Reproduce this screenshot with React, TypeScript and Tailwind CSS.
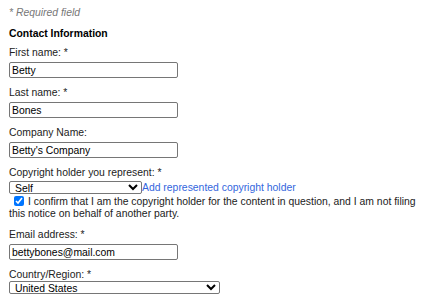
import React from 'react';

const labelCls = 'block h-[12px] leading-[12px] whitespace-nowrap';
const inputCls =
  'block mt-[3px] w-[169px] h-[16px] border border-[#767676] rounded-[2px] px-[2px] text-[10.4px] leading-[12px] text-black bg-white outline-none';

function Field({ label, value, mt }: { label: string; value: string; mt: string }) {
  return (
    <div className={mt}>
      <label className={labelCls}>{label}</label>
      <input type="text" defaultValue={value} className={inputCls} />
    </div>
  );
}

export default function App() {
  return (
    <div
      className="w-[425px] h-[303px] overflow-hidden bg-white pl-[9px] pt-[7px] text-[10.4px] leading-[12px] text-[#222]"
      style={{ fontFamily: '"Liberation Sans", Arial, sans-serif' }}
    >
      <p className="h-[12px] italic text-[#777]">* Required field</p>
      <h3 className="mt-[9px] h-[12px] font-bold text-black">Contact Information</h3>

      <Field label="First name: *" value="Betty" mt="mt-[7px]" />
      <Field label="Last name: *" value="Bones" mt="mt-[9px]" />
      <Field label="Company Name:" value="Betty's Company" mt="mt-[9px]" />

      <div className="mt-[9px]">
        <label className={labelCls}>Copyright holder you represent: *</label>
        <div className="flex items-center mt-[2px] h-[13px]">
          <select
            defaultValue="self"
            className="w-[133px] h-[13px] border border-[#767676] rounded-[2px] pl-[1px] text-[10.4px] leading-[11px] text-black bg-white"
          >
            <option value="self">Self</option>
          </select>
          <a href="#" className="text-[#3366dd] leading-[12px]">
            Add represented copyright holder
          </a>
        </div>
        <div className="mt-[2px] w-[410px]">
          <input
            type="checkbox"
            defaultChecked
            className="ml-[5px] mr-[4px] w-[10px] h-[10px] align-[-1px]"
          />
          I confirm that I am the copyright holder for the content in question, and I am not filing this notice on
          behalf of another party.
        </div>
      </div>

      <Field label="Email address: *" value="bettybones@mail.com" mt="mt-[9px]" />

      <div className="mt-[9px]">
        <label className={labelCls}>Country/Region: *</label>
        <select
          defaultValue="us"
          className="block w-[211px] h-[13px] border border-[#767676] rounded-[2px] pl-[1px] text-[10.4px] leading-[11px] text-black bg-white"
        >
          <option value="us">United States</option>
        </select>
      </div>
    </div>
  );
}
